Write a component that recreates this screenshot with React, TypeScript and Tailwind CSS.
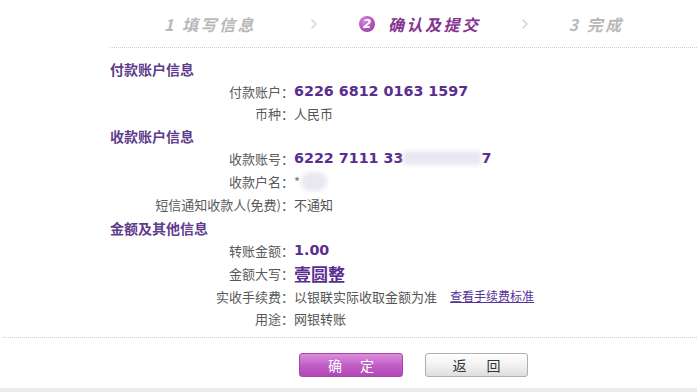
import React from "react";

const CJK = { fontFamily: '"Noto Sans CJK SC", "Noto Sans", sans-serif' };
const NUM = { fontFamily: '"DejaVu Sans", "Noto Sans CJK SC", sans-serif' };

function Chevron() {
  return (
    <svg width="8" height="12" viewBox="0 0 8 12" className="shrink-0">
      <path d="M1.5 1.5 L6 6 L1.5 10.5" fill="none" stroke="#cfcfcf" strokeWidth="1.2" />
    </svg>
  );
}

function Title({ children, h }: { children: React.ReactNode; h: string }) {
  return (
    <div className={`flex items-center ${h}`}>
      <span className="text-[14px] font-bold text-[#5f3c8e] leading-none">{children}</span>
    </div>
  );
}

function Row({ label, children, h }: { label: string; children: React.ReactNode; h: string }) {
  return (
    <div className={`grid grid-cols-[184px_1fr] items-center ${h}`}>
      <span className="text-right text-[13px] text-[#5a5a5a] leading-none whitespace-nowrap">{label}</span>
      <div className="flex items-center text-[13px] text-[#555] leading-none whitespace-nowrap">{children}</div>
    </div>
  );
}

export default function App() {
  return (
    <div className="w-[697px] h-[392px] bg-white overflow-hidden flex flex-col" style={CJK}>
      {/* Steps header */}
      <div className="h-[47px] flex items-center pl-[164px] font-bold italic text-[16px] leading-none">
        <span className="text-[#b8b8b8] tracking-[2.5px] whitespace-nowrap">1 填写信息</span>
        <span className="ml-[54px]"><Chevron /></span>
        <span className="ml-[41px] w-[16px] h-[16px] rounded-full bg-[radial-gradient(circle_at_35%_30%,#d885dc,#8f2d9e)] flex items-center justify-center text-white text-[12px] italic font-bold" style={NUM}>
          2
        </span>
        <span className="ml-[13px] text-[#84338f] tracking-[2.5px] whitespace-nowrap">确认及提交</span>
        <span className="ml-[40px]"><Chevron /></span>
        <span className="ml-[40px] text-[#b8b8b8] tracking-[2.5px] whitespace-nowrap">3 完成</span>
      </div>
      <div className="ml-[110px] border-t border-dotted border-[#cfcfcf]" />

      {/* Content */}
      <div className="pt-[9px] pl-[110px]">
        <Title h="h-[23px]">付款账户信息</Title>
        <Row label="付款账户：" h="h-[22px]">
          <span className="text-[14.3px] font-bold text-[#5a2d91]" style={NUM}>6226 6812 0163 1597</span>
        </Row>
        <Row label="币种：" h="h-[22px]">人民币</Row>
        <Title h="h-[23px]">收款账户信息</Title>
        <Row label="收款账号：" h="h-[23px]">
          <span className="text-[14.3px] font-bold text-[#5a2d91]" style={NUM}>6222 7111 33</span>
          <span className="inline-block w-[78px] h-[14px] bg-[#e9e7f1] blur-[2px] rounded-[4px]" />
          <span className="text-[14.3px] font-bold text-[#5a2d91]" style={NUM}>7</span>
        </Row>
        <Row label="收款户名：" h="h-[23px]">
          <span className="text-[#777]">*</span>
          <span className="inline-block ml-[1px] w-[26px] h-[19px] bg-[#e9e7f1] blur-[2px] rounded-full" />
        </Row>
        <Row label="短信通知收款人(免费)：" h="h-[23px]">不通知</Row>
        <Title h="h-[23px]">金额及其他信息</Title>
        <Row label="转账金额：" h="h-[23px]">
          <span className="text-[14.3px] font-bold text-[#5a2d91]" style={NUM}>1.00</span>
        </Row>
        <Row label="金额大写：" h="h-[23px]">
          <span className="text-[17px] font-bold text-[#5a2d91]">壹圆整</span>
        </Row>
        <Row label="实收手续费：" h="h-[22px]">
          <span>以银联实际收取金额为准</span>
          <span className="ml-[13px] text-[12px] text-[#553399] underline">查看手续费标准</span>
        </Row>
        <Row label="用途：" h="h-[22px]">网银转账</Row>
      </div>

      <div className="mt-[8px] ml-[3px] border-t border-dotted border-[#cfcfcf]" />

      {/* Buttons */}
      <div className="pt-[15px] pl-[299px] flex gap-[22px]">
        <div className="w-[104px] h-[24px] rounded-[3px] border border-[#a545a8] bg-gradient-to-b from-[#dc8ede] via-[#c25ec6] to-[#b247b5] flex items-center justify-center gap-[18px] text-white text-[14px] leading-none">
          <span>确</span>
          <span>定</span>
        </div>
        <div className="w-[103px] h-[24px] rounded-[3px] border border-[#b0b0b0] bg-gradient-to-b from-white via-[#f2f2f2] to-[#dedede] flex items-center justify-center gap-[20px] text-[#333] text-[14px] leading-none">
          <span>返</span>
          <span>回</span>
        </div>
      </div>

      <div className="mt-[11px] h-[4px] bg-[#ececec] shrink-0" />
    </div>
  );
}
